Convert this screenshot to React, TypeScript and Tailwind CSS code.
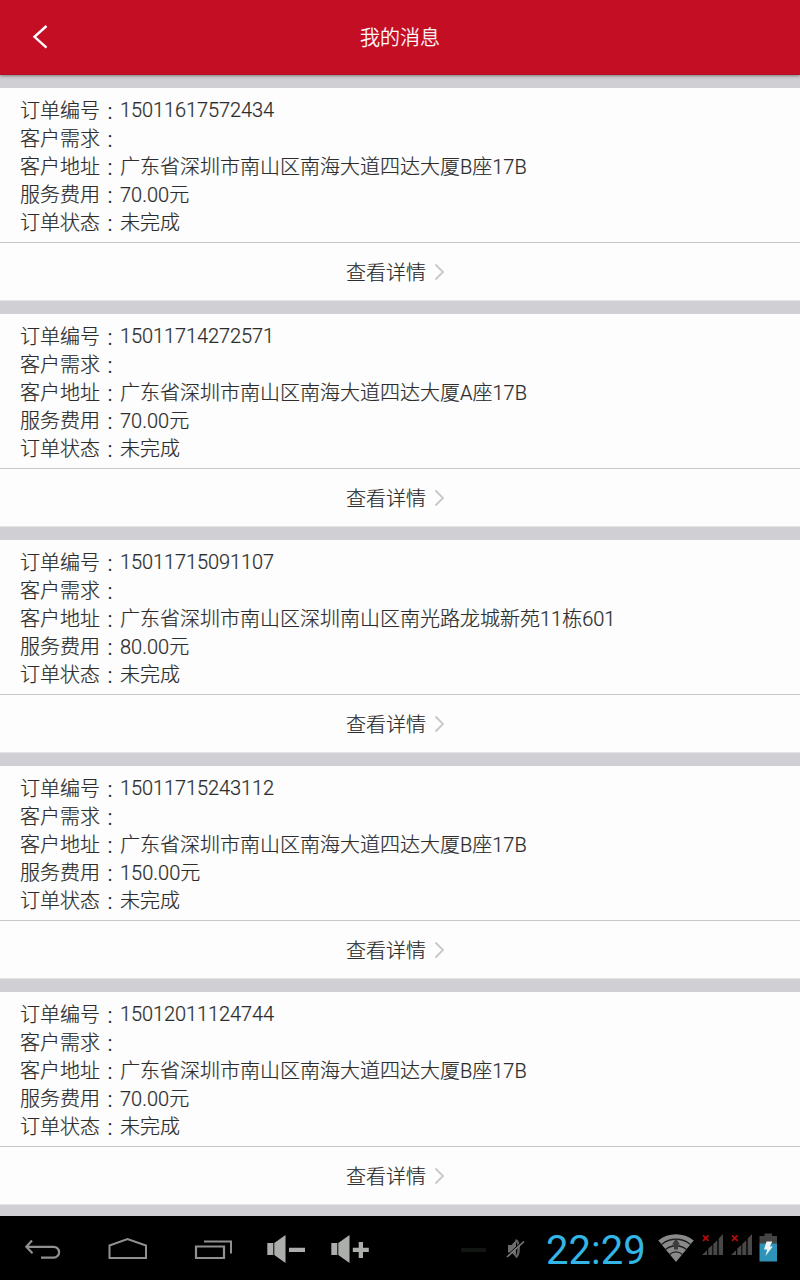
type Order = {
  id: string;
  need: string;
  address: string;
  fee: string;
  status: string;
};

const orders: Order[] = [
  { id: '15011617572434', need: '', address: '广东省深圳市南山区南海大道四达大厦B座17B', fee: '70.00元', status: '未完成' },
  { id: '15011714272571', need: '', address: '广东省深圳市南山区南海大道四达大厦A座17B', fee: '70.00元', status: '未完成' },
  { id: '15011715091107', need: '', address: '广东省深圳市南山区深圳南山区南光路龙城新苑11栋601', fee: '80.00元', status: '未完成' },
  { id: '15011715243112', need: '', address: '广东省深圳市南山区南海大道四达大厦B座17B', fee: '150.00元', status: '未完成' },
  { id: '15012011124744', need: '', address: '广东省深圳市南山区南海大道四达大厦B座17B', fee: '70.00元', status: '未完成' },
];

function Header() {
  return (
    <header className="relative z-10 grid h-[75px] shrink-0 grid-cols-[80px_1fr_80px] items-center border-b border-[#b50f22] bg-[#c40e24] shadow-[0_1px_3px_rgba(0,0,0,0.4)]">
      <svg className="ml-8 h-6 w-4" viewBox="0 0 16 24" fill="none" stroke="#fff" strokeWidth="2.4">
        <path d="M14.500 1 2.500 11.800l12 10.800" />
      </svg>
      <h1 className="pt-0.5 text-center text-[20px] leading-7 text-white [-webkit-text-stroke:0.3px]">我的消息</h1>
    </header>
  );
}

function Row({ label, value, numeric }: { label: string; value: string; numeric?: boolean }) {
  return (
    <div className="flex h-7 items-baseline whitespace-nowrap">
      <dt className="flex items-baseline">
        {label}
        <span className="relative top-0.5 w-5 pl-px font-['Noto_Sans_CJK_TC',sans-serif] text-[18px] [-webkit-text-stroke:0]">：</span>
      </dt>
      <dd className={numeric ? 'relative -top-px tracking-[-0.1px]' : ''}>{value}</dd>
    </div>
  );
}

function OrderCard({ order }: { order: Order }) {
  return (
    <li className="shrink-0 border-b border-[#e4e4e6] bg-[#fdfdfd] [-webkit-text-stroke:0.2px]">
      <dl className="h-[154px] px-5 pt-2 text-[20px] leading-7">
        <Row label="订单编号" value={order.id} numeric />
        <Row label="客户需求" value={order.need} />
        <Row label="客户地址" value={order.address} />
        <Row label="服务费用" value={order.fee} />
        <Row label="订单状态" value={order.status} />
      </dl>
      <button className="flex h-[58px] w-full items-center justify-center border-t border-[#c8c8cb] pt-0.5 pr-2 text-[20px] leading-7">
        查看详情
        <svg className="mb-0.5 ml-2 h-[18px] w-3" viewBox="0 0 12 18" fill="none" stroke="#c7c7cc" strokeWidth="1.800">
          <path d="M1.500 1.500 9 9l-7.500 7.500" />
        </svg>
      </button>
    </li>
  );
}

function Signal() {
  return (
    <svg className="h-8 w-[22px]" viewBox="0 0 22 32">
      <g fill="#484848">
        <path d="M0 23 5 18.300V23zM6.300 16.500l4-3.500v10h-4zM11.300 12l4-3.700V23h-4zM16.700 6.500 21 2v21h-4.300z" />
      </g>
      <path d="m1 3.300 5.500 5.500m0-5.500L1 8.800" stroke="#b80c0c" strokeWidth="1.700" />
    </svg>
  );
}

function SystemBar() {
  return (
    <footer className="flex h-16 shrink-0 items-center bg-black">
      {/* back */}
      <svg className="ml-6 h-6 w-[38px]" viewBox="0 0 38 24" fill="none" stroke="#8f908f" strokeWidth="2.200">
        <path d="M2.500 10.800h27.200a5.400 5.400 0 0 1 0 10.800H17M8 4.600 2.300 10.800l6.200 6.400" />
      </svg>
      {/* home */}
      <svg className="ml-[45px] h-6 w-[42px]" viewBox="0 0 42 24" fill="none" stroke="#8f908f" strokeWidth="2">
        <path d="M2.500 22V9.500L20.500 3 39 9.500V22z" />
      </svg>
      {/* recent apps */}
      <svg className="ml-[45px] h-6 w-10" viewBox="0 0 40 24" fill="none" stroke="#8f908f">
        <path d="M2 10.500h28V22H2z" strokeWidth="2.200" />
        <path d="M10 5.500h27v12" strokeWidth="2" />
      </svg>
      {/* volume down / up */}
      <svg className="ml-[32px] h-8 w-10" viewBox="0 0 40 32" fill="#acaeab">
        <path d="M1.300 11h6v12h-6zM8.300 11 19.500 3v28L8.300 23zM23 15.700h16V20H23z" />
      </svg>
      <svg className="ml-6 h-8 w-10" viewBox="0 0 40 32" fill="#acaeab">
        <path d="M1.300 11h6v12h-6zM8.300 11 19.500 3v28L8.300 23zM22.800 15.700h5.900V10H33v5.700h5.800V20H33v6h-4.300v-6h-5.900z" />
      </svg>
      <div className="ml-auto flex h-full items-center">
        <div className="mt-[3px] h-1 w-[25px] rounded-[1px] bg-[#121612]" />
        {/* muted speaker */}
        <svg className="ml-[19px] mr-px mt-0.5 h-[22px] w-[21px]" viewBox="0 0 21 22">
          <path d="M3 7h3.500L11 2v17l-4.500-4.500H3z" fill="#6c6c6c" />
          <path d="M10.500 2.200c4.200 1 4.200 15.500 0 16.800" fill="none" stroke="#606060" strokeWidth="2.500" />
          <path d="M2 17.500 18.500 2" stroke="#000" strokeWidth="1" />
          <path d="M2 19 19 3.500" stroke="#7c7c7c" strokeWidth="1.600" />
        </svg>
        <time className="ml-[19px] mt-1.5 w-[100px] text-[40px] leading-none font-normal text-[#33b5e5]">22:29</time>
        {/* wifi */}
        <svg className="ml-3 h-8 w-9" viewBox="0 0 36 32">
          <path d="M18 30 .300 8.500C10 .200 26 .200 35.700 8.500z" fill="#8a8a8a" />
          <g fill="none" stroke="#202020" strokeWidth="1.400">
            <path d="M3.500 12.500c8.500-7 20.500-7 29 0M7.500 17.500c6-5 15-5 21 0M11.500 22.500c4-3.200 9-3.200 13 0" />
          </g>
          <path d="m18 6.500-4 6h2v5h4v-5h2z" fill="#3c3c3c" />
        </svg>
        <div className="ml-2 flex gap-[7px]">
          <Signal />
          <Signal />
        </div>
        {/* battery */}
        <svg className="ml-1.5 mr-[22px] h-8 w-[19px]" viewBox="0 0 19 32">
          <path d="M5.500 1.500H13V4h5v8H.500V4h5z" fill="#444" />
          <path d="M.500 11.500H18v18H.500z" fill="#2f93b8" />
          <path d="M7.500 9.500h5.800l-2.500 5h3L6.500 24l1.700-6.500H5z" fill="#eef5f7" />
        </svg>
      </div>
    </footer>
  );
}

export default function App() {
  return (
    <div className="flex h-[1280px] w-[800px] flex-col overflow-hidden bg-[#d0cfd4] font-['Roboto','Noto_Sans_CJK_SC',sans-serif] font-light text-[#2c2c2c]">
      <Header />
      <ul className="flex min-h-0 flex-1 flex-col gap-[13px] overflow-hidden pt-[13px]">
        {orders.map((order) => (
          <OrderCard key={order.id} order={order} />
        ))}
      </ul>
      <SystemBar />
    </div>
  );
}
